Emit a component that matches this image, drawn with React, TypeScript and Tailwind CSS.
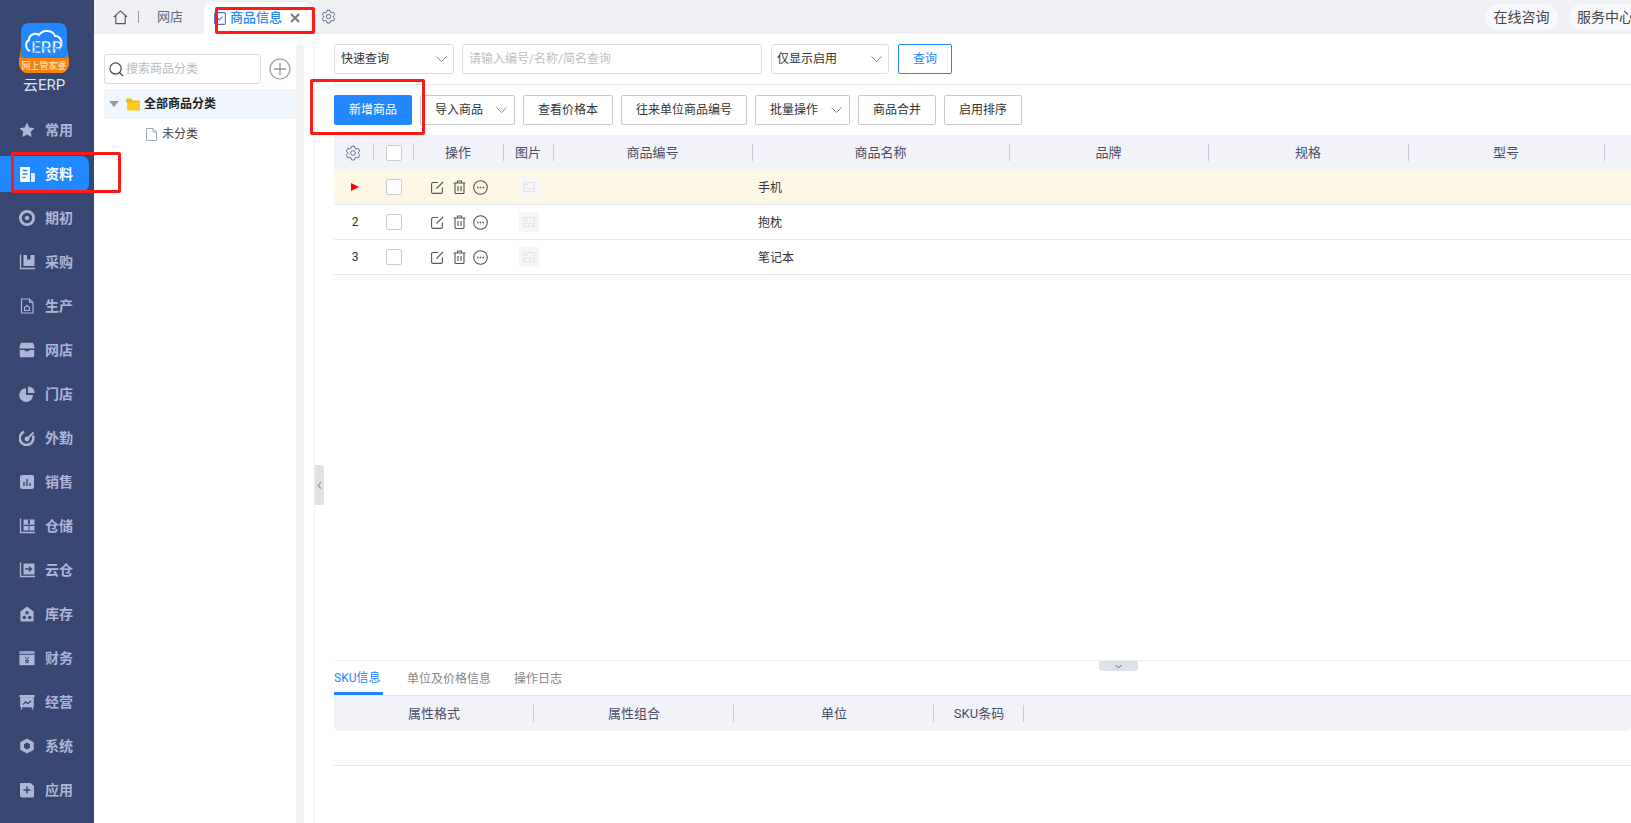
import React from "react";

const navIcons: Record<string, React.ReactNode> = {
  常用: <path d="M8 .6l2.300 4.900 5.300.7-3.900 3.600 1 5.300L8 12.500l-4.700 2.600 1-5.300L.4 6.200l5.300-.7z" fill="currentColor" />,
  资料: (
    <g fill="currentColor">
      <path d="M1 1h10v15H2a1 1 0 01-1-1z" />
      <path d="M12 7h3a1 1 0 011 1v7a1 1 0 01-1 1h-3z" opacity=".85" />
      <path d="M3.500 4.500h5M3.500 8h5M3.500 11.500h3" stroke="#2288ff" strokeWidth="1.400" />
    </g>
  ),
  期初: (
    <g fill="none" stroke="currentColor">
      <circle cx="8" cy="8" r="6.600" strokeWidth="2.800" />
      <circle cx="8" cy="8" r="1.800" fill="currentColor" strokeWidth="1" />
    </g>
  ),
  采购: (
    <g>
      <path d="M1.500 .5v14H16" fill="none" stroke="currentColor" strokeWidth="1.300" />
      <path d="M4.500 1h11v11h-11z" fill="currentColor" />
      <path d="M8 1h3.500v4.500H8z" fill="#374771" />
    </g>
  ),
  生产: (
    <g fill="none" stroke="currentColor" strokeWidth="1.200">
      <path d="M2.500 1h8l3.500 3.500V15H2.500z" />
      <path d="M10.500 1v3.500H14" />
      <path d="M5.500 9.500L8 7.500l2.500 2v3h-5z" />
    </g>
  ),
  网店: (
    <g fill="currentColor">
      <path d="M2 .8h12l1.600 4.200v1.600H.4V5z" />
      <path d="M.8 8h4.600l1 1.200h3.200l1-1.200h4.600v6.200a1 1 0 01-1 1H1.800a1 1 0 01-1-1z" />
    </g>
  ),
  门店: (
    <g fill="currentColor">
      <path d="M7 2.200A6.900 6.900 0 1014 9H7z" />
      <path d="M9 .4A7 7 0 0115.800 7H9z" />
    </g>
  ),
  外勤: (
    <g fill="none" stroke="currentColor">
      <path d="M13.800 5.500A6.800 6.800 0 115 1.800" strokeWidth="2.600" />
      <circle cx="8" cy="9" r="1.600" fill="currentColor" strokeWidth="1.600" />
      <path d="M8 9l6.500-6.500" strokeWidth="1.800" />
    </g>
  ),
  销售: (
    <g>
      <rect x="1" y="1" width="14" height="14" rx="2" fill="currentColor" />
      <path d="M5 8v4M8 5v7M11 9v3" stroke="#374771" strokeWidth="1.400" />
    </g>
  ),
  仓储: (
    <g>
      <path d="M1.500 .5v14H16" fill="none" stroke="currentColor" strokeWidth="1.300" />
      <path d="M4.500 1.500h11v11h-11z" fill="currentColor" />
      <path d="M9 1.500h2V6H9zM4.500 6.800h11v1.200h-11zM9.500 8h1v4.500h-1z" fill="#374771" />
    </g>
  ),
  云仓: (
    <g>
      <path d="M1.500 .5v14H16" fill="none" stroke="currentColor" strokeWidth="1.300" />
      <path d="M4.500 1.500h11v11h-11z" fill="currentColor" />
      <path d="M6 7h6M10 4.500L12.500 7 10 9.500" fill="none" stroke="#374771" strokeWidth="1.300" />
    </g>
  ),
  库存: (
    <g>
      <path d="M8 .4l6.600 5v9.200a1 1 0 01-1 1H2.400a1 1 0 01-1-1V5.400z" fill="currentColor" />
      <circle cx="8" cy="6.800" r="1.800" fill="#374771" />
      <circle cx="5.300" cy="11.500" r="1.800" fill="#374771" />
      <circle cx="10.700" cy="11.500" r="1.800" fill="#374771" />
    </g>
  ),
  财务: (
    <g>
      <path d="M.4 1h15.200v3H.4z" fill="currentColor" opacity=".8" />
      <path d="M.4 4.800h15.200v10.400H.4z" fill="currentColor" />
      <path d="M6 6.800L8 9.500l2-2.700M8 9.500v4M6 10.500h4M6 12h4" fill="none" stroke="#374771" strokeWidth=".9" />
    </g>
  ),
  经营: (
    <g>
      <path d="M.4 1h15.200v2.200H.4z" fill="currentColor" />
      <path d="M1.200 3.200h13.600v10H1.200z" fill="currentColor" />
      <path d="M4 10.500l2.600-2.600 2.200 1.800 3.200-3" fill="none" stroke="#374771" strokeWidth="1.300" />
      <path d="M3 13l-.8 2.600M13 13l.8 2.600" stroke="currentColor" strokeWidth="1.200" />
    </g>
  ),
  系统: <path fillRule="evenodd" d="M8 .4l6.800 3.800v7.600L8 15.600l-6.800-3.800V4.200zM8 4.600L5 6.300v3.400l3 1.700 3-1.700V6.300z" fill="currentColor" />,
  应用: (
    <g>
      <path d="M2 1h9.500L15 4v10a1.500 1.500 0 01-1.500 1.500H3A2 2 0 011 13.500V2a1 1 0 011-1z" fill="currentColor" />
      <path d="M8 4.500v7M4.500 8h7" stroke="#374771" strokeWidth="1.500" />
    </g>
  ),
};

const navItems = ["常用", "资料", "期初", "采购", "生产", "网店", "门店", "外勤", "销售", "仓储", "云仓", "库存", "财务", "经营", "系统", "应用"];

function Logo() {
  return (
    <div className="h-[108px] pl-[18px] pt-[23px]">
      <div className="flex w-[52px] flex-col items-center">
        <svg width="52" height="51" viewBox="0 0 52 51">
          <path d="M3 24L1 38c-.4 6 3 12 8 12h34c5 0 8.400-6 8-12l-2-14z" fill="#e87c0c" />
          <rect x="3" y="0" width="46" height="40" rx="8" fill="#2288ff" />
          <path d="M1 35h50v3c.4 6-3 12-8 12H9c-5 0-8.400-6-8-12z" fill="#f5830f" />
          <path d="M12 28c-5-2-5-9-1-11 0-5 6-8 10-5 4-6 14-5 16 1 6 0 9 8 4 13" fill="none" stroke="#fff" strokeWidth="2" />
          <text x="29" y="30" textAnchor="middle" fontSize="17" fontWeight="700" fill="#fff" stroke="#2288ff" strokeWidth=".6" fontFamily="Roboto, sans-serif">ERP</text>
          <text x="26" y="46" textAnchor="middle" fontSize="9" fill="#ffe9c8" fontFamily="'Noto Sans CJK SC', sans-serif">网上管家婆</text>
        </svg>
        <span className="mt-[1px] text-[15px] leading-[20px] text-[#dfe3f2]">云ERP</span>
      </div>
    </div>
  );
}

function Sidebar() {
  return (
    <aside className="flex w-[94px] shrink-0 flex-col bg-[#374771]">
      <Logo />
      <nav className="flex flex-col">
        {navItems.map((n) => {
          const active = n === "资料";
          return (
            <div key={n} className="flex h-[44px] items-center">
              <div className={`flex h-[36px] w-[89px] items-center gap-[10px] rounded-r-[8px] pl-[19px] ${active ? "bg-[#2288ff] text-white" : "text-[#adb5d8]"}`}>
                <svg width="16" height="16" viewBox="0 0 16 16" className="shrink-0">
                  {navIcons[n]}
                </svg>
                <span className="text-[14px] font-bold leading-none">{n}</span>
              </div>
            </div>
          );
        })}
      </nav>
    </aside>
  );
}

function Gear({ size = 15, color = "#5a5f78" }: { size?: number; color?: string }) {
  return (
    <svg width={size} height={size} viewBox="0 0 24 24" fill="none" stroke={color} strokeWidth="1.500" strokeLinejoin="round">
      <path d="M9.700 2h4.600l.7 3.100 1.800 1 3-1 2.300 4-2.300 2.100v2l2.300 2.100-2.300 4-3-1-1.800 1-.7 3.100H9.700L9 19.300l-1.800-1-3 1-2.300-4L4.200 13.200v-2L1.900 9.100l2.300-4 3 1 1.800-1z" />
      <circle cx="12" cy="12" r="3.500" />
    </svg>
  );
}

function TopBar() {
  return (
    <div className="flex h-[34px] shrink-0 items-end bg-[#f0f1f5]">
      <div className="flex h-[34px] items-center pl-[19px]">
        <svg width="15" height="15" viewBox="0 0 16 16" fill="none" stroke="#555" strokeWidth="1.200">
          <path d="M1 7.500L8 1l7 6.500M3 6v8.500h10V6" />
        </svg>
        <span className="ml-[10px] h-[12px] w-px bg-[#999]" />
        <span className="ml-[18px] text-[13px] text-[#666]">网店</span>
      </div>
      <div className="ml-[21px] flex h-[32px] w-[106px] items-center rounded-t-[8px] bg-white pl-[10px]">
        <svg width="12" height="13" viewBox="0 0 12 13" fill="none" stroke="#4a72c8" strokeWidth="1.100">
          <rect x=".6" y=".6" width="10.800" height="11.800" rx="1.500" />
          <path d="M3.500 6l2 2 3-3.500" />
        </svg>
        <span className="ml-[4px] text-[13px] font-medium text-[#2288ff]">商品信息</span>
        <svg width="10" height="10" viewBox="0 0 10 10" stroke="#777" strokeWidth="1.800" className="ml-[8px]">
          <path d="M1 1l8 8M9 1l-8 8" />
        </svg>
      </div>
      <div className="ml-[11px] flex h-[32px] items-start pt-[7px]">
        <Gear />
      </div>
      <div className="ml-auto flex h-[34px] items-center gap-[11px]">
        <span className="flex h-[26px] w-[73px] items-center justify-center rounded-[13px] bg-[#f8f9fc] text-[14px] text-[#444]">在线咨询</span>
        <span className="flex h-[26px] w-[62px] items-center overflow-hidden whitespace-nowrap rounded-l-[13px] bg-[#f8f9fc] pl-[8px] text-[14px] text-[#444]">服务中心</span>
      </div>
    </div>
  );
}

function LeftPanel() {
  return (
    <div className="flex w-[221px] shrink-0 border-r border-[#eeeeee]">
      <div className="ml-[10px] w-[192px] pt-[20px]">
        <div className="flex items-start">
          <div className="flex h-[30px] w-[157px] items-center rounded-[3px] border border-[#dddddd] pl-[4px]">
            <svg width="15" height="15" viewBox="0 0 16 16" fill="none" stroke="#444" strokeWidth="1.300">
              <circle cx="7" cy="7" r="6" />
              <path d="M11.500 11.500L15 15" />
            </svg>
            <span className="ml-[2px] text-[12px] text-[#bbbbbb]">搜索商品分类</span>
          </div>
          <svg width="22" height="22" viewBox="0 0 22 22" fill="none" stroke="#9a9a9a" strokeWidth="1.200" className="ml-[8px] mt-[4px]">
            <circle cx="11" cy="11" r="10" />
            <path d="M11 5v12M5 11h12" strokeWidth="1.400" />
          </svg>
        </div>
        <div className="mt-[5px] flex h-[30px] items-center bg-[#f0f6fc] pl-[5px]">
          <span className="h-0 w-0 border-x-[5px] border-t-[6px] border-x-transparent border-t-[#999999]" />
          <svg width="14" height="13" viewBox="0 0 14 13" className="ml-[7px]">
            <path d="M0 1.500A1 1 0 011 .5h4l1.500 2H13a1 1 0 011 1V4H0z" fill="#f5b70f" />
            <path d="M1 4h13v7.500a1 1 0 01-1 1H2a1 1 0 01-1-1z" fill="#ffc81a" />
          </svg>
          <span className="ml-[4px] text-[12px] font-bold text-[#222]">全部商品分类</span>
        </div>
        <div className="flex h-[30px] items-center pl-[42px]">
          <svg width="11" height="13" viewBox="0 0 11 13" fill="none" stroke="#9aa6c4" strokeWidth="1">
            <path d="M.5.5h6.500l3.500 3.500v8.500H.5z" />
            <path d="M7 .5V4h3.500" />
          </svg>
          <span className="ml-[5px] text-[12px] text-[#444]">未分类</span>
        </div>
      </div>
      <div className="mt-[10px] h-full w-[8px] rounded-t-[4px] bg-[#f3f3f3]" />
    </div>
  );
}

function Chevron() {
  return (
    <svg width="11" height="6" viewBox="0 0 11 6" fill="none" stroke="#8a8a8a" strokeWidth="1">
      <path d="M.5.5l5 5 5-5" />
    </svg>
  );
}

function Btn({ w, children, arrow }: { w: string; children: string; arrow?: boolean }) {
  return (
    <button className={`flex h-[30px] ${w} shrink-0 items-center ${arrow ? "justify-start pl-[14px]" : "justify-center"} gap-[13px] rounded-[2px] border border-[#c9c9c9] bg-white text-[12px] text-[#333]`}>
      <span>{children}</span>
      {arrow && <Chevron />}
    </button>
  );
}

const colW = ["w-[40px]", "w-[40px]", "w-[90px]", "w-[50px]", "w-[199px]", "w-[257px]", "w-[199px]", "w-[200px]", "w-[196px]"];
const heads = ["", "", "操作", "图片", "商品编号", "商品名称", "品牌", "规格", "型号"];

function Box() {
  return <span className="h-[16px] w-[16px] rounded-[2px] border border-[#cccccc] bg-white" />;
}

function Divider() {
  return <span className="absolute right-0 top-[9px] h-[17px] w-px bg-[#c8cadb]" />;
}

function HeaderRow() {
  return (
    <div className="flex h-[35px] rounded-tl-[5px] bg-[#f2f3f9]">
      {heads.map((h, i) => (
        <div key={i} className={`relative flex ${colW[i]} shrink-0 items-center justify-center ${i === 1 ? "" : "pr-[2px]"} text-[13px] text-[#4b4d66]`}>
          {i === 0 && <Gear size={16} color="#6a6f8c" />}
          {i === 1 && <Box />}
          {h}
          <Divider />
        </div>
      ))}
    </div>
  );
}

function Actions() {
  return (
    <div className="flex items-center gap-[9px] pl-[17px]">
      <svg width="13" height="13" viewBox="0 0 13 13" fill="none" stroke="#555" strokeWidth="1.100">
        <path d="M7 1.500H2A1.500 1.500 0 00.6 3v8A1.500 1.500 0 002 12.400h8A1.500 1.500 0 0011.400 11V6.500" />
        <path d="M5.500 7.500L12 1" stroke="#555" />
      </svg>
      <svg width="13" height="14" viewBox="0 0 13 14" fill="none" stroke="#555" strokeWidth="1.100">
        <path d="M.5 3h12M4.500 3V1h4v2M2 3v9.500a1 1 0 001 1h7a1 1 0 001-1V3M5 6v5M8 6v5" />
      </svg>
      <svg width="15" height="15" viewBox="0 0 15 15" fill="none" stroke="#555" strokeWidth="1.100" className="-ml-[2px]">
        <circle cx="7.500" cy="7.500" r="6.800" />
        <path d="M4 7.500h1.500M6.800 7.500h1.500M9.600 7.500h1.500" strokeWidth="1.500" />
      </svg>
    </div>
  );
}

function Thumb() {
  return (
    <span className="flex h-[20px] w-[20px] items-center justify-center bg-[#f6f6f6]">
      <svg width="12" height="10" viewBox="0 0 12 10" fill="none" stroke="#e4e4e4">
        <rect x=".5" y=".5" width="11" height="9" />
        <path d="M.5 8l3-2.500 2.500 2 2-1.500 3.500 2.500" />
        <circle cx="3.500" cy="3" r=".8" />
      </svg>
    </span>
  );
}

function Row({ n, name, hl }: { n: number; name: string; hl?: boolean }) {
  return (
    <div className={`flex h-[35px] items-center border-b border-[#e6e8f0] ${hl ? "bg-[#fdf7e6]" : "bg-white"}`}>
      <div className={`flex ${colW[0]} shrink-0 justify-center pl-[2px] text-[12px] text-[#333]`}>
        {hl ? <span className="h-0 w-0 border-y-[4px] border-l-[8px] border-y-transparent border-l-[#ff0000]" /> : n}
      </div>
      <div className={`flex ${colW[1]} shrink-0 justify-center`}>
        <Box />
      </div>
      <div className={`${colW[2]} shrink-0`}>
        <Actions />
      </div>
      <div className={`flex ${colW[3]} shrink-0 pl-[15px]`}>
        <Thumb />
      </div>
      <div className={`${colW[4]} shrink-0`} />
      <div className={`${colW[5]} shrink-0 pl-[5px] pt-[1px] text-[12px] text-[#333]`}>{name}</div>
    </div>
  );
}

function Bottom() {
  const cols: [string, string][] = [
    ["w-[200px]", "属性格式"],
    ["w-[200px]", "属性组合"],
    ["w-[200px]", "单位"],
    ["w-[90px]", "SKU条码"],
  ];
  return (
    <div className="h-[163px] shrink-0 border-t border-[#eeeef6]">
      <div className="flex h-[35px] items-end gap-[24px] border-b border-[#e5e5e5] text-[12px] text-[#888888]">
        <span className="flex h-[34px] w-[49px] items-center whitespace-nowrap border-b-[3px] border-[#2288ff] pt-[3px] text-[#2288ff]">SKU信息</span>
        <span className="flex h-[34px] items-center pt-[1px]">单位及价格信息</span>
        <span className="-ml-[1px] flex h-[34px] items-center pt-[1px]">操作日志</span>
      </div>
      <div className="flex h-[35px] rounded-b-[5px] bg-[#f2f3f9]">
        {cols.map(([w, t]) => (
          <div key={t} className={`relative flex ${w} items-center justify-center text-[13px] text-[#4b4d66]`}>
            {t}
            <Divider />
          </div>
        ))}
      </div>
      <div className="h-[35px] border-b border-[#e8e8e8]" />
    </div>
  );
}

function Content() {
  return (
    <div className="flex min-w-0 flex-1 flex-col pl-[19px]">
      <div className="flex h-[51px] shrink-0 items-start gap-[8px] border-b border-[#e4e5ee] pt-[10px] text-[12px]">
        <div className="flex h-[30px] w-[120px] items-center justify-between rounded-[3px] border border-[#dddddd] pl-[6px] pr-[6px] text-[#333]">
          快速查询
          <Chevron />
        </div>
        <div className="flex h-[30px] w-[300px] items-center rounded-[3px] border border-[#dddddd] pl-[6px] text-[#c0c0c0]">请输入编号/名称/简名查询</div>
        <div className="ml-[1px] flex h-[30px] w-[118px] items-center justify-between rounded-[3px] border border-[#dddddd] pl-[5px] pr-[6px] text-[#333]">
          仅显示启用
          <Chevron />
        </div>
        <button className="ml-[1px] h-[30px] w-[54px] rounded-[2px] border border-[#2288ff] text-[12px] text-[#2288ff]">查询</button>
      </div>
      <div className="flex shrink-0 gap-[8px] pb-[10px] pt-[10px]">
        <button className="h-[30px] w-[78px] shrink-0 rounded-[2px] bg-[#2288ff] text-[12px] text-white">新增商品</button>
        <Btn w="w-[95px]" arrow>导入商品</Btn>
        <Btn w="w-[90px]">查看价格本</Btn>
        <Btn w="w-[126px]">往来单位商品编号</Btn>
        <Btn w="w-[95px]" arrow>批量操作</Btn>
        <Btn w="w-[78px]">商品合并</Btn>
        <Btn w="w-[78px]">启用排序</Btn>
      </div>
      <div className="min-h-0 flex-1">
        <HeaderRow />
        <Row n={1} name="手机" hl />
        <Row n={2} name="抱枕" />
        <Row n={3} name="笔记本" />
      </div>
      <Bottom />
    </div>
  );
}

export default function App() {
  return (
    <div className="relative flex h-[823px] w-[1631px] overflow-hidden bg-white font-['Roboto','Noto_Sans_CJK_SC',sans-serif]">
      <Sidebar />
      <div className="flex min-w-0 flex-1 flex-col">
        <TopBar />
        <div className="flex min-h-0 flex-1">
          <LeftPanel />
          <Content />
        </div>
      </div>

      <div className="absolute left-[315px] top-[465px] flex h-[40px] w-[9px] items-center justify-center rounded-r-[3px] bg-[#dfe1e8]">
        <svg width="5" height="7" viewBox="0 0 5 7" fill="none" stroke="#666">
          <path d="M4 .5L1 3.500l3 3" />
        </svg>
      </div>
      <div className="absolute left-[1099px] top-[661px] flex h-[10px] w-[39px] items-center justify-center rounded-b-[4px] bg-[#dfe1e8]">
        <svg width="7" height="5" viewBox="0 0 7 5" fill="none" stroke="#666">
          <path d="M.5 1l3 3 3-3" />
        </svg>
      </div>

      <div className="absolute left-[215px] top-[7px] h-[27px] w-[100px] rounded-[2px] border-[3px] border-[#ff1a1a]" />
      <div className="absolute left-[310px] top-[79px] h-[56px] w-[115px] rounded-[2px] border-[3px] border-[#ff1a1a]" />
      <div className="absolute left-[11px] top-[152px] h-[41px] w-[110px] rounded-[2px] border-[3px] border-[#ff1a1a]" />
    </div>
  );
}
